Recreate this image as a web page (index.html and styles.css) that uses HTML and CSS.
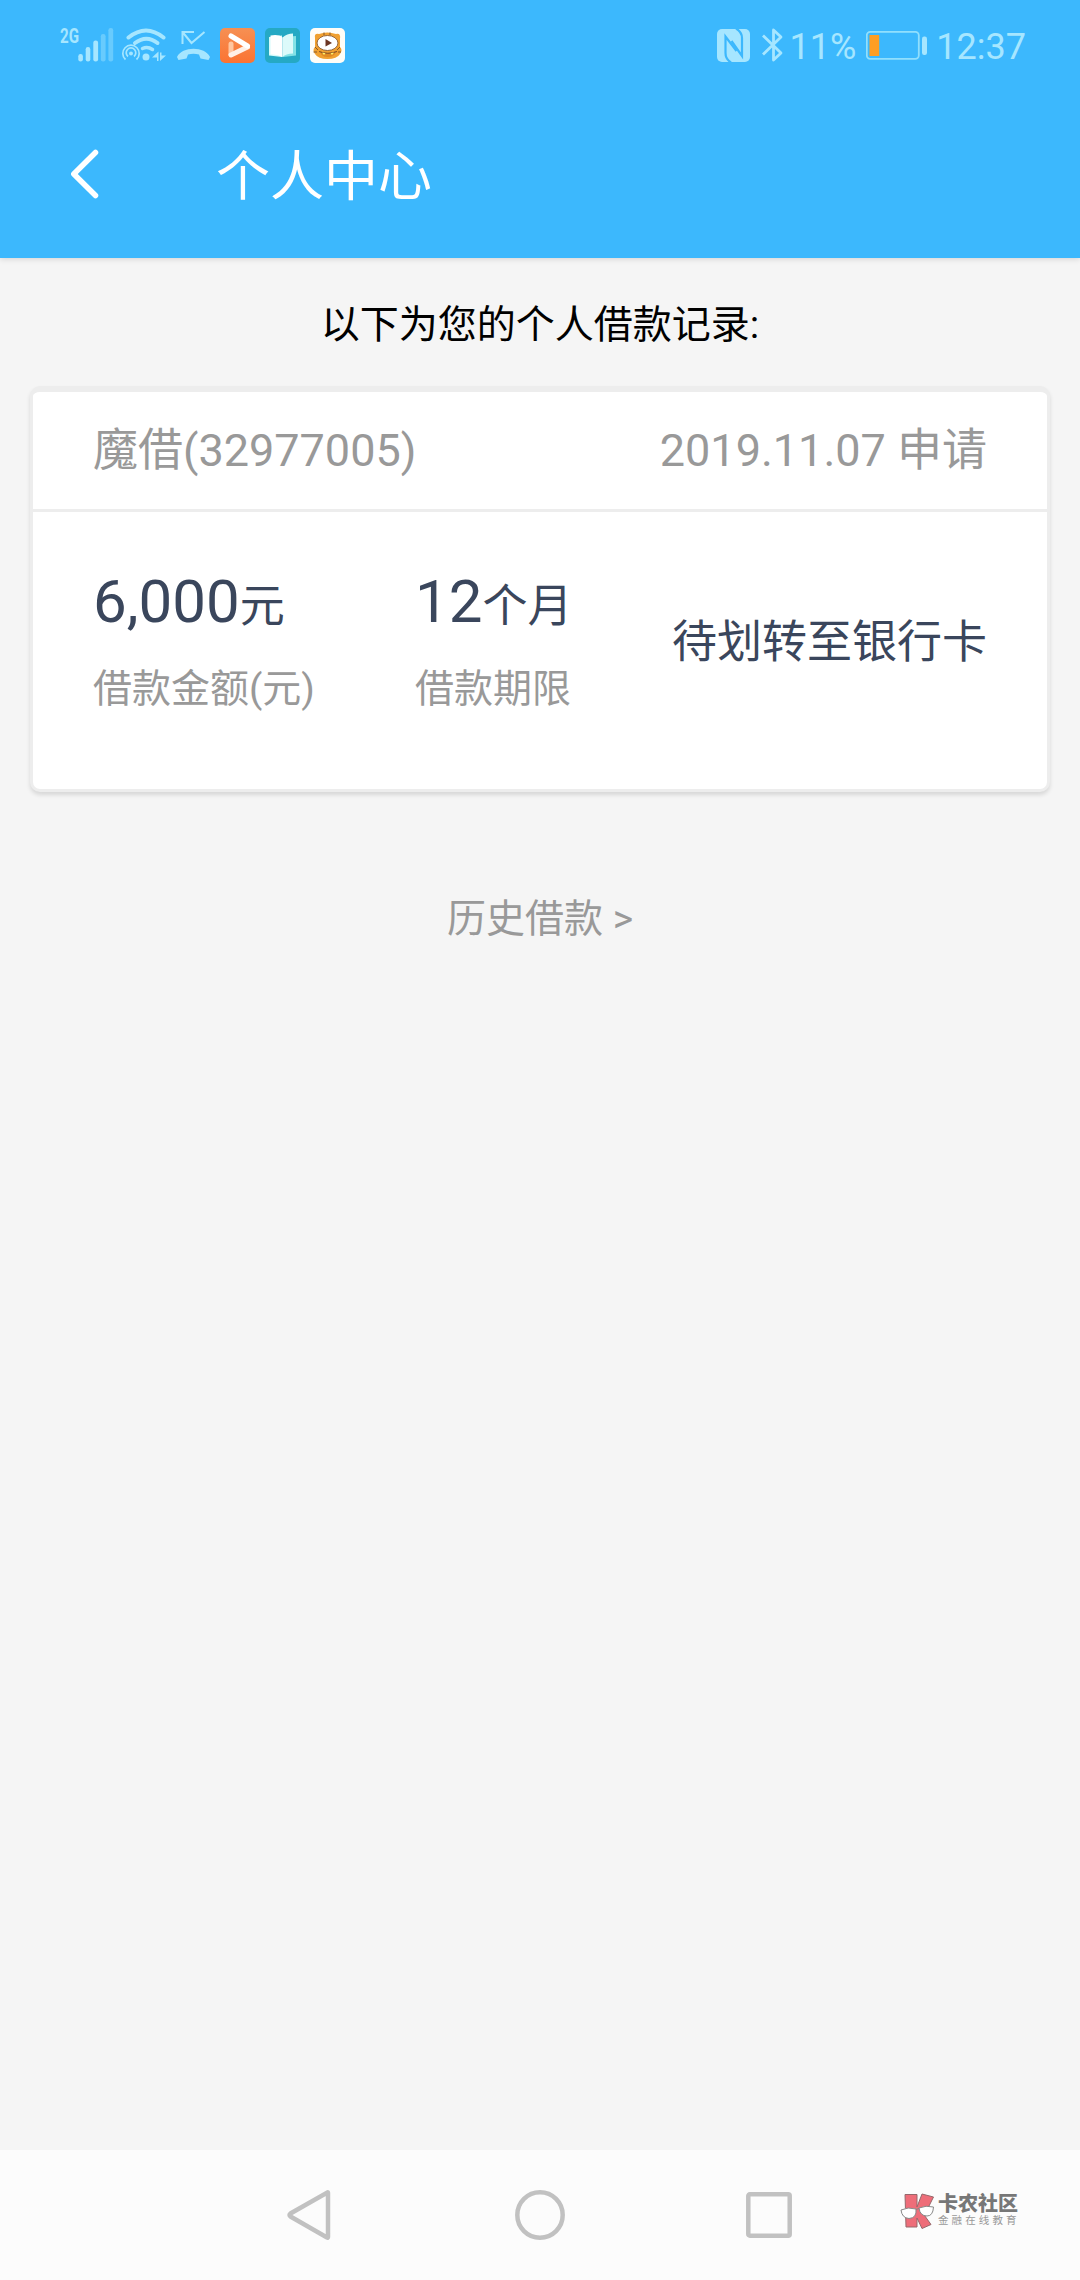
FILE: index.html
```html
<!DOCTYPE html>
<html lang="zh-CN">
<head>
<meta charset="utf-8">
<title>个人中心</title>
<link rel="stylesheet" href="styles.css">
</head>
<body>
<header class="header">
  <div class="status-bar">
    <div class="status-group">
      <svg class="signal" width="56" height="40" viewBox="59 25 56 40" fill="#a6e6ff">
        <text x="60" y="43" font-size="20" textLength="19" lengthAdjust="spacingAndGlyphs" font-weight="700">2G</text>
        <rect x="78.3" y="54" width="4.6" height="7.5" rx="2.2"/>
        <rect x="85.7" y="47" width="4.6" height="14.5" rx="2.2"/>
        <rect x="93.3" y="40.5" width="4.8" height="21" rx="2.2"/>
        <g opacity=".42"><rect x="100.8" y="34" width="4.8" height="27.5" rx="2.2"/><rect x="108.4" y="28" width="4.8" height="33.5" rx="2.2"/></g>
      </svg>
      <svg width="46" height="40" viewBox="121 25 46 40" fill="none" stroke="#a6e6ff">
        <path d="M128.500 37.500Q146 23.500 163.500 37.500" stroke-width="4" stroke-linecap="round"/>
        <path d="M135 43Q146.500 34.500 157.500 43" stroke-width="4" stroke-linecap="round"/>
        <path d="M142.500 48.500Q147.500 46 152.500 49.500" stroke-width="3.500" stroke-linecap="round"/>
        <path d="M125.500 59.500A8.200 8.200 0 1 1 136.500 59.500M128 56.500A4.800 4.800 0 1 1 134 56.500" stroke-width="1.700"/>
        <circle cx="131" cy="53.500" r="2" fill="#a6e6ff" stroke="none"/>
        <circle cx="146" cy="57" r="3.500" fill="#a6e6ff" stroke="none"/>
        <path d="M152 57.500L158.500 51.500V61H157V57.500ZM160 52.500H161.500V55.500H166L160 61Z" fill="#a6e6ff" stroke="none"/>
      </svg>
      <svg width="34" height="40" viewBox="177 25 34 40" fill="none" stroke="#a6e6ff">
        <path d="M182.500 44V32H194M182.500 32L191.500 43L204.500 32" stroke-width="2"/>
        <path d="M177 57C182 46 205 46 210 57L208.500 60L200.500 58.500L199 54.500Q193.500 53 188 54.500L186.500 58.500L178.500 60Z" fill="#a6e6ff" stroke="none"/>
      </svg>
      <svg class="app" width="35" height="35" viewBox="0 0 35 35">
        <defs><linearGradient id="og" x1="0" y1="0" x2="0" y2="1"><stop stop-color="#f69053"/><stop offset="1" stop-color="#fb7332"/></linearGradient></defs>
        <rect width="35" height="35" rx="5" fill="url(#og)"/>
        <path d="M11 16V26.500" stroke="#ffc6a0" stroke-width="5" stroke-linecap="round"/>
        <path d="M11 27L27.500 19" stroke="#fff0e6" stroke-width="5" stroke-linecap="round"/>
        <path d="M11 8L27.500 18" stroke="#fff" stroke-width="5" stroke-linecap="round"/>
      </svg>
      <svg class="app" width="35" height="35" viewBox="0 0 35 35">
        <rect width="35" height="35" rx="5" fill="#25a9c4"/>
        <path d="M4 9L17 7.500V29L4 27.500Z" fill="#d5fbfb"/>
        <path d="M18 9L31 8V27.500L18 29Z" fill="#83e2e6"/>
        <path d="M5.500 7.500Q14 6 17.500 9.500V29Q13 26 5.500 26.500Z" fill="#fff"/>
        <path d="M17.500 9.500Q22 5.500 28 5.500V25.500Q21 25.500 17.500 29Z" fill="#dcfafa"/>
      </svg>
      <svg class="app" width="35" height="35" viewBox="0 0 35 35">
        <rect width="35" height="35" rx="5" fill="#fffdf7"/>
        <path d="M5 10Q4 5 9 6Q17 3 26 6Q31 5 30 11L30 19Q33 22 30 26Q27 31 17.500 31Q8 31 5 26Q2 22 5 19Z" fill="#f0a030"/>
        <path d="M5 19L8 22M3.500 24H7M30 19L27 22M31 24H28M14 4.500V7M20 4.500V7" stroke="#8a5826" stroke-width="1"/>
        <ellipse cx="17.500" cy="15" rx="10.500" ry="7.500" fill="#fff" stroke="#8a5a30" stroke-width=".9"/>
        <path d="M15.500 11L22 15L15.500 18.500Z" fill="#6b3524"/>
        <path d="M10 23Q17.500 27 26 23Q25 29 17.500 29Q11 29 10 23Z" fill="#e08a22"/>
        <path d="M9 23.500Q17.500 27 27 23.500" stroke="#7a4c28" fill="none" stroke-width="1"/>
        <path d="M12 24.500L14 27L15.500 25.200ZM20.500 25.200L22 27L24 24.500Z" fill="#fff36c"/>
      </svg>
    </div>
    <div class="status-group status-right">
      <svg width="33" height="33" viewBox="0 0 33 33" fill="none" stroke="#3cb8fd">
        <rect width="33" height="33" rx="5" fill="#a6e6ff" stroke="none"/>
        <path d="M14 33.500Q8.500 30 8.500 24V7.500L19.500 22" stroke-width="2.200"/>
        <path d="M19 -.5Q25 3 25 9V27L14.500 12" stroke-width="2.200"/>
      </svg>
      <svg class="bluetooth" width="21" height="36" viewBox="0 0 21 36" fill="none" stroke="#a6e6ff" stroke-width="2.800">
        <path d="M1 8.500L19 26L11.500 33V3L19 10L1 27.500" stroke-linejoin="round"/>
      </svg>
      <span class="status-text percent">11%</span>
      <svg class="battery" width="62" height="30" viewBox="866 30 62 30">
        <rect x="866.800" y="31.800" width="52" height="27" rx="3.500" fill="none" stroke="#91dffd" stroke-width="1.800"/>
        <rect x="869.500" y="35" width="9.700" height="21" fill="#ff9e22"/>
        <rect x="922" y="36.500" width="5" height="18.500" rx="2.200" fill="#a6e6ff"/>
      </svg>
      <span class="status-text">12:37</span>
    </div>
  </div>
  <div class="title-bar">
    <svg class="back" width="30" height="52" viewBox="70 148 30 52" fill="none" stroke="#fff" stroke-width="5.500" stroke-linecap="round" stroke-linejoin="round"><path d="M95.500 152.500L73.800 174L95.500 195.500"/></svg>
    <h1 class="title">个人中心</h1>
  </div>
</header>
<main class="content">
  <p class="intro">以下为您的个人借款记录:</p>
  <section class="card">
    <div class="card-head">
      <span>魔借(32977005)</span>
      <span>2019.11.07 申请</span>
    </div>
    <div class="card-body">
      <div class="amount">
        <div class="value"><span class="number">6,000</span>元</div>
        <div class="label">借款金额(元)</div>
      </div>
      <div class="term">
        <div class="value"><span class="number">12</span>个月</div>
        <div class="label">借款期限</div>
      </div>
      <div class="state">待划转至银行卡</div>
    </div>
  </section>
  <a class="history">历史借款 &gt;</a>
</main>
<nav class="nav-bar">
  <svg width="44" height="52" viewBox="0 0 44 52" class="nav-icon"><path d="M40.500 3.500Q41 3 41 4V48Q41 49 40 48.500L3.500 27.500Q1.500 26 3.500 24.500Z"/></svg>
  <svg width="52" height="52" viewBox="0 0 52 52" class="nav-icon"><circle cx="26" cy="26" r="22.700"/></svg>
  <svg width="46" height="46" viewBox="0 0 46 46" class="nav-icon"><rect x="2.300" y="2.300" width="41.400" height="41.400" rx="1.500"/></svg>
  <div class="brand">
    <svg width="35" height="37" viewBox="0 0 35 37">
      <path d="M5 1.500H17V14L22 1L33.500 4L27 17L22 19L31 31.500L22 35.500L17 25V34H6Z" fill="#ee6d79" stroke="#96686b" stroke-width="1" stroke-linejoin="round"/>
      <g fill="#fff" stroke="#888" stroke-width="1">
        <path d="M1 17Q8 13.500 16 16Q17 25 9 25.500Q2 25 1 17ZM19 15Q26 12 33.500 14Q33 23 27 23Q20 23 19 15ZM16 16.500L19 15.500"/>
      </g>
    </svg>
    <div class="brand-text"><strong>卡农社区</strong><small>金融在线教育</small></div>
  </div>
</nav>
</body>
</html>
```
FILE: styles.css
```css
* { box-sizing: border-box; }
body {
  margin: 0;
  width: 1080px;
  height: 2280px;
  display: flex;
  flex-direction: column;
  overflow: hidden;
  background: #f5f5f5;
  font-family: Roboto, "Noto Sans CJK SC", sans-serif;
}
svg { display: block; flex: none; }
.header {
  height: 258px;
  flex: none;
  background: #3cb8fd;
  box-shadow: 0 1px 6px rgba(0, 0, 0, .14);
}
.status-bar {
  height: 90px;
  padding: 0 54px 0 59px;
  display: flex;
  justify-content: space-between;
}
.status-group { display: flex; align-items: center; gap: 10px; }
.status-group > :nth-child(1) { margin-right: -4px; }
.status-group > :nth-child(3) { margin-right: -1px; }
.status-right { gap: 0; }
.status-right > :nth-child(1) { margin-right: 12px; }
.bluetooth { margin-right: 7px; }
.status-text { font-size: 36px; line-height: 40px; color: #a6e6ff; padding-top: 3px; }
.status-right > .percent { margin-right: 10px; }
.battery { margin-right: 8px; }
.title-bar {
  height: 168px;
  display: flex;
  align-items: center;
  padding: 0 70px;
  gap: 116px;
}
.title { margin: 0; padding-top: 8px; font-size: 54px; font-weight: 400; line-height: 80px; color: #fff; }
.content { flex: 1; display: flex; flex-direction: column; align-items: center; }
.intro { margin: 37px 0 0; font-size: 39px; line-height: 60px; color: #000; }
.card {
  width: 1020px;
  height: 406px;
  margin-top: 31px;
  background: #fff;
  border: 3px solid #ededed;
  border-top-width: 6px;
  border-radius: 10px;
  box-shadow: 0 3px 4px rgba(0, 0, 0, .12);
}
.card-head {
  height: 120px;
  padding: 0 60px 8px;
  border-bottom: 3px solid #ededed;
  display: flex;
  justify-content: space-between;
  align-items: center;
  font-size: 45px;
  color: #999;
}
.card-body { display: flex; padding: 50px 60px 0; color: #3a465c; }
.amount { width: 322px; }
.value { font-size: 45px; line-height: 80px; height: 80px; }
.number { font-size: 60px; }
.label { font-size: 39px; line-height: 60px; margin-top: 17px; color: #999; }
.state { margin-left: auto; margin-top: 51px; font-size: 45px; line-height: 60px; }
.history { margin-top: 97px; font-size: 39px; line-height: 60px; color: #999; }
.nav-bar {
  height: 130px;
  flex: none;
  padding: 0 60px 0 287px;
  background: #fcfcfc;
  display: flex;
  align-items: center;
}
.nav-icon { fill: none; stroke: #c1c1c1; stroke-width: 4.5; margin-right: 183px; }
.nav-icon:nth-child(2) { margin-right: 180px; }
.nav-icon:nth-child(3) { margin-right: 108px; }
.brand { display: flex; align-items: center; gap: 3px; padding-bottom: 8px; }
.brand-text { display: flex; flex-direction: column; color: #777; white-space: nowrap; }
.brand strong { font-size: 20px; line-height: 20px; font-weight: 900; }
.brand small { font-size: 10.5px; line-height: 14px; letter-spacing: 3.1px; color: #999; }
```
